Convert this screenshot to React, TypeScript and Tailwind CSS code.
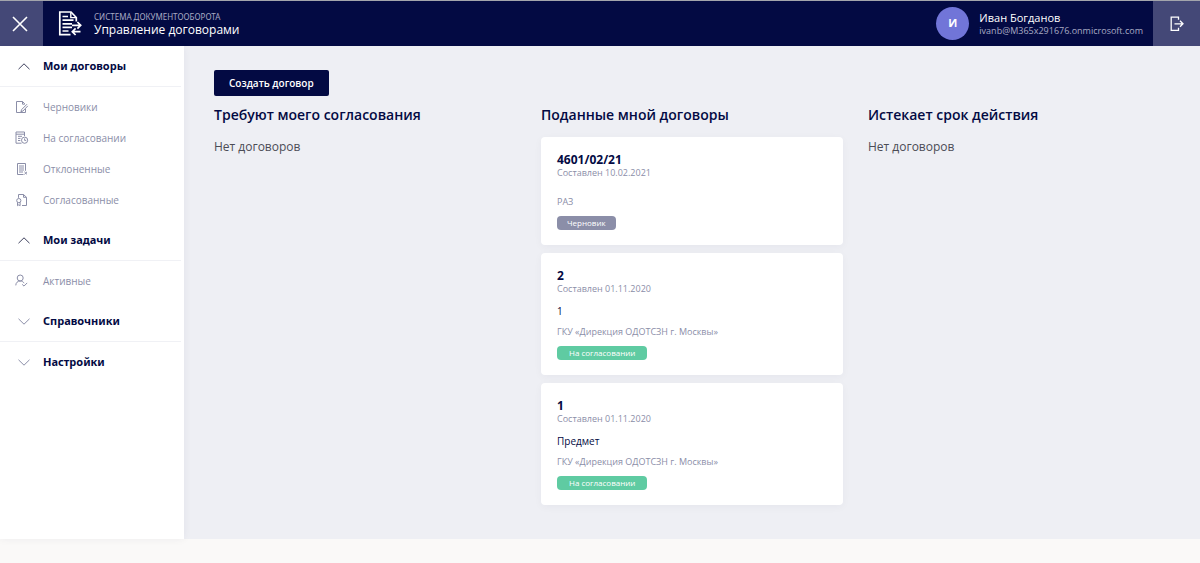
import type { ReactNode } from 'react';

// === ICONS ===
const Icon = ({ children, size = 14 }: { children: ReactNode; size?: number }) => (
  <svg width={size} height={size} viewBox="0 0 14 14" fill="none" stroke="currentColor" strokeWidth="1" aria-hidden="true">
    {children}
  </svg>
);

const DraftIcon = () => (
  <Icon>
    <path d="M10.5 9V12.5H1.5V1.5H7.5L9.8 3.8M7.5 1.5V4.2H9.8" />
    <path d="M12 4.2L6.6 9.6L5.9 11.7L8 11L12.8 5.9" />
  </Icon>
);

const PendingIcon = () => (
  <Icon>
    <path d="M6.5 12.2H1V1H9.5V5" />
    <path d="M1 3.2H9.5M3 5.3H7M3 7.4H5.5M3 9.5H5.3" />
    <circle cx="9.6" cy="9.2" r="3.1" />
    <path d="M9.6 7.4V9.4H11.2" />
  </Icon>
);

const RejectedIcon = () => (
  <Icon>
    <path d="M8.5 12.5H2.5V1.5H10.5V8.8M4 4H9M4 6H9M4 8H9M4 10H8" />
    <path d="M9.4 9.8L12 12.4M12 9.8L9.4 12.4" />
  </Icon>
);

const ApprovedIcon = () => (
  <Icon>
    <path d="M3.5 4.8V1.5H8.5L11.5 4.3V12.5H7M8.5 1.5V4.3H11.5" />
    <circle cx="3.8" cy="7.6" r="2.1" />
    <path d="M2.5 9.3V12.7L3.8 11.8L5.1 12.7V9.3" />
  </Icon>
);

const ActiveIcon = () => (
  <Icon>
    <circle cx="5.2" cy="4" r="3" />
    <path d="M0.8 11.4C0.8 8.8 2.6 7 5.2 7C7 7 8.4 7.9 9.1 9.2M7.2 10.4L9 12.1L12.2 8.9" />
  </Icon>
);

const Chevron = ({ open }: { open: boolean }) => (
  <svg width="12" height="7" viewBox="0 0 12 7" fill="none" stroke="currentColor" aria-hidden="true">
    <path d={open ? 'M0.5 6.2L6 0.8L11.5 6.2' : 'M0.5 0.8L6 6.2L11.5 0.8'} />
  </svg>
);

const Logo = () => (
  <svg width="24" height="26" viewBox="0 0 24 26" fill="none" stroke="white" strokeWidth="1.7" aria-hidden="true">
    <path d="M12.5 23.6H1.8V1H13L18.3 6.5V10.5" />
    <path d="M12.8 1.2V6.6H18" strokeWidth="1.4" />
    <path d="M4.5 5.5H10M4.5 9.2H15.5M4.5 12.8H14M4.5 16.4H14M4.5 20H10.5" />
    <path d="M14 14.3H22.6M19.4 11L22.7 14.3L19.4 17.6" />
    <path d="M22.5 20.7H14.4M17.6 17.4L14.3 20.7L17.6 24" />
  </svg>
);

// === DATA ===
const menu = [
  {
    title: 'Мои договоры',
    open: true,
    items: [
      { label: 'Черновики', icon: <DraftIcon /> },
      { label: 'На согласовании', icon: <PendingIcon /> },
      { label: 'Отклоненные', icon: <RejectedIcon /> },
      { label: 'Согласованные', icon: <ApprovedIcon /> },
    ],
  },
  { title: 'Мои задачи', open: true, items: [{ label: 'Активные', icon: <ActiveIcon /> }] },
  { title: 'Справочники', open: false, items: [] },
  { title: 'Настройки', open: false, items: [] },
];

type Contract = { number: string; date: string; subject: string; company: string; status: 'draft' | 'pending' };

const submitted: Contract[] = [
  { number: '4601/02/21', date: '10.02.2021', subject: '', company: 'РАЗ', status: 'draft' },
  { number: '2', date: '01.11.2020', subject: '1', company: 'ГКУ «Дирекция ОДОТСЗН г. Москвы»', status: 'pending' },
  { number: '1', date: '01.11.2020', subject: 'Предмет', company: 'ГКУ «Дирекция ОДОТСЗН г. Москвы»', status: 'pending' },
];

const columns = [
  { title: 'Требуют моего согласования', contracts: [] as Contract[] },
  { title: 'Поданные мной договоры', contracts: submitted },
  { title: 'Истекает срок действия', contracts: [] as Contract[] },
];

const Header = () => (
  <header className="flex h-[46px] border-t border-[#a3a5ac] bg-[#030a43] text-white">
    <button type="button" aria-label="Закрыть меню" className="flex w-[43px] shrink-0 items-center justify-center bg-[#444877] pr-1">
      <svg width="16" height="16" viewBox="0 0 16 16" fill="none" stroke="currentColor" strokeWidth="1.6" aria-hidden="true">
        <path d="M1 1L15 15M15 1L1 15" />
      </svg>
    </button>
    <div className="flex grow items-center gap-3 pl-[15px]">
      <Logo />
      <div className="pt-px">
        <p className="font-['Noto_Sans',sans-serif] text-[8px] leading-[11px] text-[#a9abc4]">СИСТЕМА ДОКУМЕНТООБОРОТА</p>
        <p className="text-[12px] leading-4">Управление договорами</p>
      </div>
    </div>
    <div className="flex items-center gap-[10px] pr-[10px]">
      <div className="flex size-[33px] items-center justify-center rounded-full bg-[#7175d8] text-[11px] font-bold">И</div>
      <div>
        <p className="text-[11px] leading-[14px]">Иван Богданов</p>
        <p className="text-[9px] leading-3 text-[#a9abc4]">ivanb@M365x291676.onmicrosoft.com</p>
      </div>
    </div>
    <button type="button" aria-label="Выйти" className="flex w-[47px] shrink-0 items-center justify-center bg-[#444877]">
      <svg width="14" height="16" viewBox="0 0 14 16" fill="none" stroke="currentColor" strokeWidth="1.3" aria-hidden="true">
        <path d="M8.5 3.8V1.2H1.2V14.4H8.5V11.8M4.5 7.8H13M10 4.8L13 7.8L10 10.8" />
      </svg>
    </button>
  </header>
);

const Sidebar = () => (
  <nav className="w-[184px] shrink-0 bg-white shadow-[0_0_8px_rgba(3,10,67,0.06)]">
    {menu.map((section, i) => (
      <div key={section.title}>
        <button
          type="button"
          className={`flex h-[41px] w-[181px] items-center border-b text-left font-['Noto_Sans',sans-serif] text-[11px] font-bold text-[#030a43] ${
            i < menu.length - 1 ? 'border-[#f0f1f5]' : 'border-transparent'
          }`}
        >
          <span className={`flex w-[43px] pl-[18px] ${section.open ? 'text-[#3c3f5c]' : 'text-[#8b8ea8]'}`}>
            <Chevron open={section.open} />
          </span>
          {section.title}
        </button>
        {section.items.length > 0 && (
          <ul className="pt-[5px] pb-1">
            {section.items.map((item) => (
              <li key={item.label}>
                <a href="#" className="flex h-[31px] items-center text-[10px] text-[#8b8ea8]">
                  <span className="w-[43px] pb-[2px] pl-[15px]">{item.icon}</span>
                  {item.label}
                </a>
              </li>
            ))}
          </ul>
        )}
      </div>
    ))}
  </nav>
);

const ContractCard = ({ contract }: { contract: Contract }) => (
  <article className="flex flex-col items-start rounded bg-white px-4 pt-4 pb-[15px] shadow-[0_2px_8px_rgba(3,10,67,0.04)]">
    <h3 className="text-[12px] leading-[14px] font-bold text-[#030a43]">{contract.number}</h3>
    <p className="text-[9px] leading-3 text-[#8b8ea8]">Составлен {contract.date}</p>
    <p className="mt-[9px] text-[10px] leading-[14px] text-[#030a43]">{contract.subject}</p>
    <p className="mt-[6px] text-[9px] leading-4 text-[#8b8ea8]">{contract.company}</p>
    {contract.status === 'draft' ? (
      <span className="mt-[6px] rounded bg-[#8b8ea8] px-[10px] text-[8px] leading-[14px] text-white">Черновик</span>
    ) : (
      <span className="mt-[6px] rounded bg-[#5fcba2] px-3 text-[8px] leading-[14px] text-white">На согласовании</span>
    )}
  </article>
);

export default function App() {
  return (
    <div className="min-h-screen bg-[#faf9f8] font-['Open_Sans','Noto_Sans',sans-serif]">
      <Header />
      <div className="flex bg-[#eeeff4]">
        <Sidebar />
        <main className="min-w-0 grow px-[30px] pt-6 pb-[34px]">
          <button type="button" className="block h-[26px] rounded-xs bg-[#030a43] px-[15px] text-[10px] font-semibold text-white">
            Создать договор
          </button>
          <div className="mt-[9px] grid grid-cols-3 gap-[25px]">
            {columns.map((column) => (
              <section key={column.title}>
                <h2 className="text-[14px] leading-5 font-semibold text-[#030a43]">{column.title}</h2>
                {column.contracts.length > 0 ? (
                  <div className="mt-3 flex flex-col gap-2">
                    {column.contracts.map((contract) => (
                      <ContractCard key={contract.number} contract={contract} />
                    ))}
                  </div>
                ) : (
                  <p className="mt-3 text-[12px] leading-5 text-[#4b4c55]">Нет договоров</p>
                )}
              </section>
            ))}
          </div>
        </main>
      </div>
    </div>
  );
}
